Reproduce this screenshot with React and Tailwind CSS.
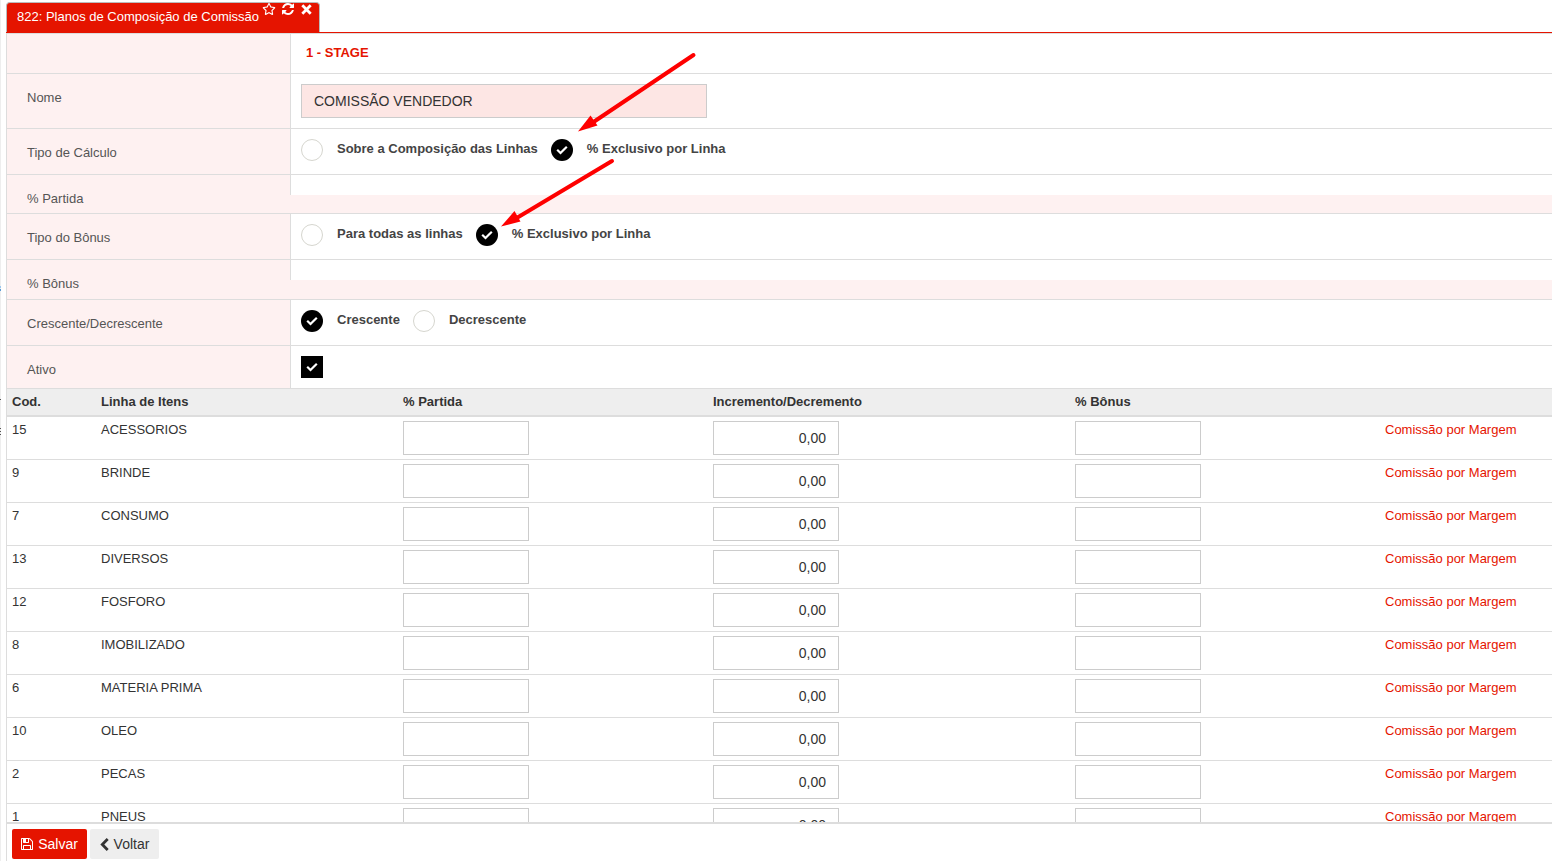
import { FaRegStar } from "react-icons/fa";

const LINHAS = [
  { cod: 15, nome: "ACESSORIOS" },
  { cod: 9, nome: "BRINDE" },
  { cod: 7, nome: "CONSUMO" },
  { cod: 13, nome: "DIVERSOS" },
  { cod: 12, nome: "FOSFORO" },
  { cod: 8, nome: "IMOBILIZADO" },
  { cod: 6, nome: "MATERIA PRIMA" },
  { cod: 10, nome: "OLEO" },
  { cod: 2, nome: "PECAS" },
  { cod: 1, nome: "PNEUS" },
];

// FontAwesome 4 glyphs
function IconeAtualizar() {
  return (
    <svg className="w-3 h-3" viewBox="0 0 1536 1536" fill="currentColor">
      <path d="M1511 928q0 5-1 7-64 268-268 434.500T764 1536q-146 0-282.500-55T238 1324l-129 129q-19 19-45 19t-45-19-19-45V960q0-26 19-45t45-19h448q26 0 45 19t19 45-19 45l-137 137q71 66 161 102t187 36q134 0 250-65t186-179q11-17 53-117 8-23 30-23h192q13 0 22.500 9.500t9.500 22.500zm25-800v448q0 26-19 45t-45 19h-448q-26 0-45-19t-19-45 19-45l138-138Q969 256 768 256q-134 0-250 65T332 500q-11 17-53 117-8 23-30 23H50q-13 0-22.500-9.500T18 608v-7q65-268 270-434.500T768 0q146 0 284 55.500T1297 212l130-129q19-19 45-19t45 19 19 45z" />
    </svg>
  );
}

function IconeFechar() {
  return (
    <svg className="w-[11px] h-[11px]" viewBox="0 0 11 11" fill="none" stroke="currentColor" strokeWidth="2.8">
      <path d="M1.300 1.300 9.700 9.700M9.700 1.300 1.300 9.700" />
    </svg>
  );
}

function IconeCheck() {
  return (
    <svg className="w-3 h-[10px]" viewBox="0 0 12 10" fill="none" stroke="currentColor" strokeWidth="2.2">
      <path d="M1.200 4.700 4.500 8 10.800 1.700" />
    </svg>
  );
}

function IconeSalvar() {
  return (
    <svg className="w-3 h-3" viewBox="0 0 1536 1536" fill="currentColor">
      <path d="M384 1408h768v-384H384v384zm896 0h128V512q0-14-10-38.500t-20-34.500l-281-281q-10-10-34-20t-39-10v416q0 40-28 68t-68 28H352q-40 0-68-28t-28-68V128H128v1280h128V992q0-40 28-68t68-28h832q40 0 68 28t28 68v416zM896 480V160q0-13-9.500-22.500T864 128H672q-13 0-22.500 9.500T640 160v320q0 13 9.500 22.500T672 512h192q13 0 22.500-9.500T896 480zm640 32v928q0 40-28 68t-68 28H96q-40 0-68-28t-28-68V96q0-40 28-68T96 0h928q40 0 88 20t76 48l280 280q28 28 48 76t20 88z" />
    </svg>
  );
}

function IconeVoltar() {
  return (
    <svg className="w-[9px] h-[13px]" viewBox="0 0 9 13" fill="none" stroke="currentColor" strokeWidth="2.8">
      <path d="M7.700 1 2.300 6.500 7.700 12" />
    </svg>
  );
}

function Opcao({ texto, marcado, className = "" }) {
  return (
    <label className={`flex items-center ${className}`}>
      <span
        className={`w-[22px] h-[22px] rounded-full flex items-center justify-center ${
          marcado ? "bg-black text-white" : "bg-white border border-[#d6d6cf]"
        }`}
      >
        {marcado && <IconeCheck />}
      </span>
      <span className="relative -top-px ml-[14px] font-bold">{texto}</span>
    </label>
  );
}

function Linha({ rotulo, altura, parcial, children }) {
  return (
    <div className={`flex shrink-0 border-b border-[#ddd] bg-[#fef1f1] ${altura}`}>
      <div className="w-[283px] shrink-0 pl-5 pt-[15px] text-[#555]">{rotulo}</div>
      <div className={`flex-1 border-l border-[#ddd] bg-white pl-[10px] ${parcial ? "h-5" : ""}`}>{children}</div>
    </div>
  );
}

function Campo({ valor }) {
  return (
    <input
      type="text"
      readOnly
      value={valor}
      className="block w-[126px] h-[34px] border border-[#ccc] bg-white px-3 text-right text-[14px] text-[#333] outline-none"
    />
  );
}

function Setas() {
  return (
    <svg className="absolute left-[490px] top-[40px] pointer-events-none" width="220" height="200" viewBox="490 40 220 200">
      <g stroke="#fe0000" strokeWidth="4" strokeLinecap="round" fill="#fe0000">
        <path d="M693.500 55 592 123" />
        <path d="M578 131.500 590.500 115.500 597.500 125.500z" stroke="none" />
        <path d="M612 161 515 219" />
        <path d="M501 226.500 514.500 211 520.500 221.500z" stroke="none" />
      </g>
    </svg>
  );
}

export default function App() {
  return (
    <div className="relative flex h-[861px] w-[1552px] overflow-hidden bg-white font-['Liberation_Sans',Arial,sans-serif] text-[13px] leading-[18px] text-[#333]">
      {/* edge of the side menu */}
      <div className="mr-[5px] w-px shrink-0 bg-[#eee]">
        <div className="mt-[286px] h-[2px] bg-[#9cc8ee]" />
        <div className="mt-px h-[2px] bg-[#5a9bd5]" />
        <div className="mt-[108px] h-px bg-[#555]" />
        <div className="mt-[28px] h-px bg-[#555]" />
        <div className="mt-[2px] h-px bg-[#555]" />
        <div className="mt-[2px] h-px bg-[#555]" />
      </div>

      <div className="flex flex-1 flex-col pt-[2px]">
        <div className="flex h-[31px] shrink-0 border-b border-[#e51400]">
          <div className="flex h-[30px] w-[314px] rounded-t-sm border border-b-0 border-[#bbb] bg-[#e51400] pl-[10px] text-white">
            <span className="pt-[5px]">822: Planos de Composição de Comissão</span>
            <div className="flex h-[12px] items-center pl-[3px]">
              <FaRegStar className="w-[14px] h-[12px] mr-[6px]" />
              <IconeAtualizar />
              <span className="ml-[7px]">
                <IconeFechar />
              </span>
            </div>
          </div>
        </div>

        <div className="flex h-[789px] shrink-0 flex-col overflow-hidden border-l border-t border-[#ddd]">
          <Linha altura="h-10">
            <div className="pl-[5px] pt-[10px] font-bold text-[#e51400]">1 - STAGE</div>
          </Linha>
          <Linha rotulo="Nome" altura="h-[55px]">
            <input
              type="text"
              readOnly
              value="COMISSÃO VENDEDOR"
              className="mt-[10px] block h-[34px] w-[406px] border border-[#ccc] bg-[#fde6e4] px-3 text-[14px] text-[#333] outline-none"
            />
          </Linha>
          <Linha rotulo="Tipo de Cálculo" altura="h-[46px]">
            <div className="flex pt-[10px] text-[#444]">
              <Opcao texto="Sobre a Composição das Linhas" className="mr-[13px]" />
              <Opcao texto="% Exclusivo por Linha" marcado />
            </div>
          </Linha>
          <Linha rotulo="% Partida" altura="h-[39px]" parcial />
          <Linha rotulo="Tipo do Bônus" altura="h-[46px]">
            <div className="flex pt-[10px] text-[#444]">
              <Opcao texto="Para todas as linhas" className="mr-[13px]" />
              <Opcao texto="% Exclusivo por Linha" marcado />
            </div>
          </Linha>
          <Linha rotulo="% Bônus" altura="h-10" parcial />
          <Linha rotulo="Crescente/Decrescente" altura="h-[46px]">
            <div className="flex pt-[10px] text-[#444]">
              <Opcao texto="Crescente" marcado className="mr-[13px]" />
              <Opcao texto="Decrescente" />
            </div>
          </Linha>
          <Linha rotulo="Ativo" altura="h-[43px]">
            <div className="mt-[10px] flex h-[22px] w-[22px] items-center justify-center bg-black text-white">
              <IconeCheck />
            </div>
          </Linha>

          <div className="grid h-7 shrink-0 grid-cols-[89px_302px_310px_362px_1fr] border-b-2 border-[#ddd] bg-[#eee] pl-[5px] pt-[4px] font-bold">
            <span>Cod.</span>
            <span>Linha de Itens</span>
            <span>% Partida</span>
            <span>Incremento/Decremento</span>
            <span>% Bônus</span>
          </div>
          {LINHAS.map((linha) => (
            <div
              key={linha.cod}
              className="grid h-[43px] shrink-0 grid-cols-[89px_302px_310px_362px_310px_1fr] border-b border-[#ddd] pl-[5px] pt-[4px]"
            >
              <span>{linha.cod}</span>
              <span>{linha.nome}</span>
              <Campo valor="" />
              <Campo valor="0,00" />
              <Campo valor="" />
              <a className="text-[#e51400]">Comissão por Margem</a>
            </div>
          ))}
        </div>

        <div className="flex h-[39px] gap-[3px] border-l border-t-2 border-[#ddd] pl-[5px] pt-[5px] text-[14px]">
          <button className="flex h-[30px] w-[75px] items-center justify-center gap-[5px] rounded-[2px] bg-[#e51400] text-white">
            <IconeSalvar />
            Salvar
          </button>
          <button className="flex h-[30px] w-[69px] items-center justify-center gap-[5px] rounded-[2px] bg-[#eee] text-[#333]">
            <IconeVoltar />
            Voltar
          </button>
        </div>
      </div>

      <Setas />
    </div>
  );
}
